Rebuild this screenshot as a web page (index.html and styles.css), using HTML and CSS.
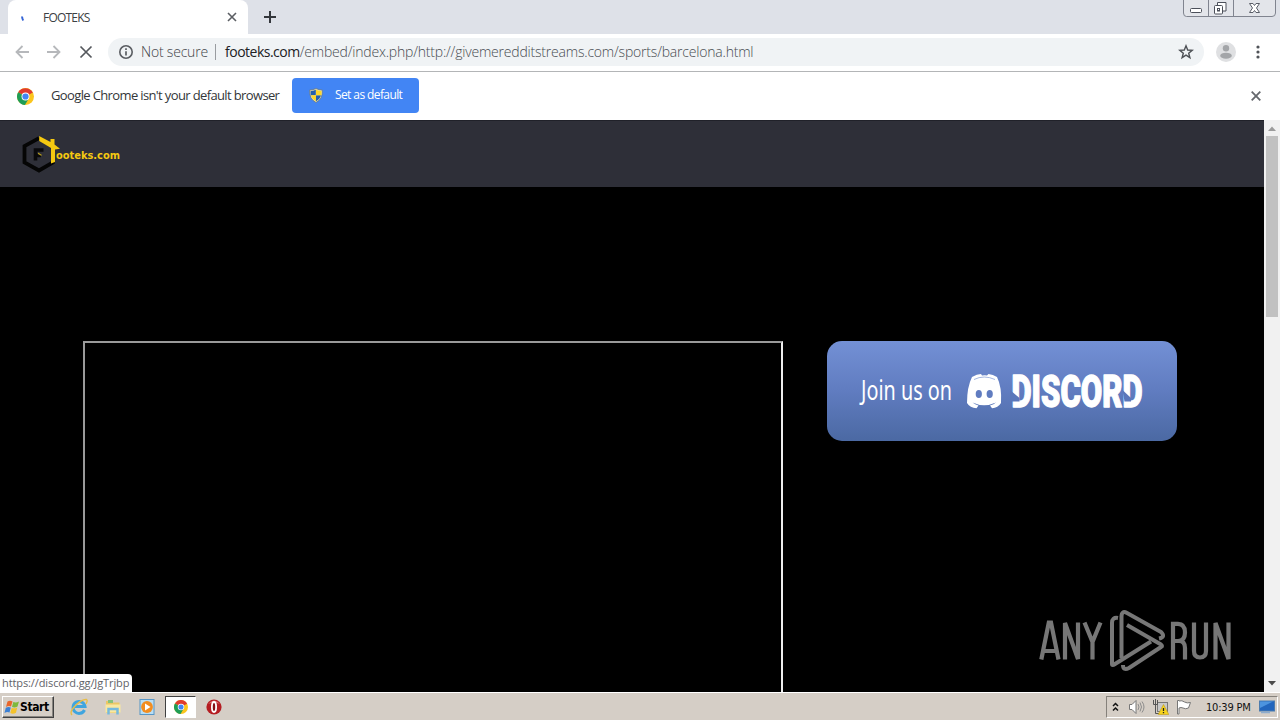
FILE: index.html
```html
<!DOCTYPE html>
<html lang="en">

<head>
  <meta charset="UTF-8" />
  <meta name="viewport" content="width=device-width, initial-scale=1.0" />
  <title>FOOTEKS</title>
  <link rel="stylesheet" href="styles.css">
</head>

<body>

  <!-- shared chrome logo -->
  <svg class="defs" width="0" height="0">
    <symbol id="chrome" viewBox="0 0 18 18">
      <circle cx="9" cy="9" r="9" fill="#fbc51d" />
      <path d="M9 9 L1.2 4.5 A9 9 0 0 1 16.8 4.8 Z" fill="#e03b2f" />
      <path d="M9 9 L1.2 4.5 A9 9 0 0 0 8.4 18 L12.5 11 Z" fill="#1f9d56" />
      <circle cx="9" cy="9" r="4.2" fill="#fff" />
      <circle cx="9" cy="9" r="3.3" fill="#4285f4" />
    </symbol>
  </svg>

  <div class="tabstrip">
    <div class="tab">
      <svg class="spinner" width="8" height="10" viewBox="0 0 8 10"><path d="M2 2.5 Q2.3 5 3.3 6.5" fill="none" stroke="#3565d6" stroke-width="2" /></svg>
      <span class="tab-title">FOOTEKS</span>
      <svg width="10" height="10" viewBox="0 0 10 10"><path d="M1 1 L9 9 M9 1 L1 9" stroke="#5b5e63" stroke-width="1.6" /></svg>
    </div>
    <svg class="new-tab" width="12" height="12" viewBox="0 0 12 12"><path d="M6 0 V12 M0 6 H12" stroke="#34373c" stroke-width="2" /></svg>
    <svg class="win-controls" width="94" height="18" viewBox="0 0 94 18">
      <path d="M1.5 0 V13 Q1.5 16.5 4.5 16.5 H90 Q93.5 16.5 93.5 13 V0 M26.5 0 V16 M51.5 0 V16" fill="#e3e5ea" stroke="#80848f" />
      <rect x="8.5" y="8.5" width="11" height="4" rx="1" fill="#fff" stroke="#4c505a" />
      <path d="M35.5 2.5 h8.5 v8.5 h-8.5 z" fill="#fff" stroke="#4c505a" />
      <rect x="32.5" y="5.5" width="8" height="8.5" rx="1" fill="#fff" stroke="#4c505a" />
      <rect x="35.5" y="8.5" width="2" height="2.5" fill="none" stroke="#4c505a" />
      <path d="M67.5 3.5 h3.5 l1.5 2 l1.5 -2 h3.5 l-3 4.5 l3 4.5 h-3.5 l-1.5 -2 l-1.5 2 h-3.5 l3 -4.5 z" fill="#fff" stroke="#5a5e68" />
    </svg>
  </div>

  <div class="toolbar">
    <svg class="nav-icon" width="14" height="14" viewBox="0 0 14 14"><path d="M14 7 H1.5 M7.5 1 L1.5 7 L7.5 13" fill="none" stroke="#b6b8bb" stroke-width="1.8" /></svg>
    <svg class="nav-icon" width="14" height="14" viewBox="0 0 14 14"><path d="M0 7 H12.5 M6.5 1 L12.5 7 L6.5 13" fill="none" stroke="#b6b8bb" stroke-width="1.8" /></svg>
    <svg class="nav-icon" width="14" height="14" viewBox="0 0 14 14"><path d="M1.5 1.5 L12.5 12.5 M12.5 1.5 L1.5 12.5" stroke="#55585d" stroke-width="1.7" /></svg>
    <div class="omnibox">
      <svg width="16" height="16" viewBox="0 0 16 16"><circle cx="8" cy="8" r="6.2" fill="none" stroke="#5a5d62" stroke-width="1.6" /><path d="M8 7.2 V11.5 M8 4.3 V6" stroke="#5a5d62" stroke-width="1.7" /></svg>
      <span class="secure">Not secure</span>
      <span class="divider"></span>
      <span class="url"><b>footeks.com</b>/embed/index.php/http://givemeredditstreams.com/sports/barcelona.html</span>
      <svg class="star" width="16" height="16" viewBox="0 0 16 16"><path d="M8 1.8 L9.7 6 L14.2 6.3 L10.7 9.2 L11.9 13.7 L8 11.2 L4.1 13.7 L5.3 9.2 L1.8 6.3 L6.3 6 Z" fill="none" stroke="#4e5156" stroke-width="1.4" /></svg>
    </div>
    <svg class="avatar" width="20" height="20" viewBox="0 0 20 20"><circle cx="10" cy="10" r="10" fill="#dfe0e2" /><circle cx="10" cy="6.3" r="3.2" fill="#a3a5a8" /><ellipse cx="10" cy="13.7" rx="5.8" ry="3" fill="#a3a5a8" /></svg>
    <svg class="dots" width="4" height="14" viewBox="0 0 4 14"><circle cx="2" cy="2" r="1.6" fill="#505358" /><circle cx="2" cy="7" r="1.6" fill="#505358" /><circle cx="2" cy="12" r="1.6" fill="#505358" /></svg>
  </div>

  <div class="infobar">
    <svg width="17" height="17"><use href="#chrome" /></svg>
    <span class="infobar-text">Google Chrome isn't your default browser</span>
    <div class="default-btn">
      <svg width="14" height="15" viewBox="0 0 14 15">
        <path d="M7 0.5 Q10 2 13.3 2 Q14 11 7 14.5 Q0 11 0.7 2 Q4 2 7 0.5 Z" fill="#e8e0b0" stroke="#65798c" stroke-width="0.8" />
        <path d="M6.8 1.8 V7.2 H1.7 Q1.5 5 1.7 3 Q4 3 6.8 1.8 Z M7 7.2 H12 Q11 11 7 13.3 Z" fill="#245fae" />
        <path d="M7 1.8 V7.2 H12.4 V3 Q10 3 7 1.8 Z M7 7.2 H2 Q3 11 7 13.3 Z" fill="#fbd62c" />
      </svg>
      <span>Set as default</span>
    </div>
    <svg class="infobar-close" width="10" height="10" viewBox="0 0 10 10"><path d="M0.7 0.7 L9.3 9.3 M9.3 0.7 L0.7 9.3" stroke="#65686d" stroke-width="1.8" /></svg>
  </div>

  <div class="viewport">
    <div class="page">
      <div class="site-nav">
        <svg width="102" height="40" viewBox="0 0 102 40">
          <path d="M18 3.2 L3.5 11.2 V27.5 L18 35.5 L32 27.5 V12 L18 3.2" fill="none" stroke="#050505" stroke-width="3.8" />
          <path d="M14.5 25.5 V15 H22.500 M14.5 20.5 H20" fill="none" stroke="#09090b" stroke-width="3.6" />
          <path d="M17 17.5 L20.5 19.5 V21 L17 19 Z" fill="#b49b1d" />
          <path d="M18.2 1 L29.5 7 V4 H33.5 V9.5 L39 13.8 L34 14.5 V27 L30 28.5 V13 L18.2 6 Z" fill="#f5c911" />
          <text class="logo-text" x="35" y="23.5" textLength="64" lengthAdjust="spacingAndGlyphs">ooteks.com</text>
        </svg>
      </div>
      <div class="content">
        <div class="player"></div>
        <svg class="discord" width="350" height="100" viewBox="0 0 350 100">
          <defs>
            <linearGradient id="blurple" x1="0" y1="0" x2="0" y2="1"><stop offset="0" stop-color="#7390d5" /><stop offset="0.5" stop-color="#607cc0" /><stop offset="1" stop-color="#4b69a3" /></linearGradient>
          </defs>
          <rect width="350" height="100" rx="15" fill="url(#blurple)" />
          <text class="join-text" x="34" y="59" textLength="91" lengthAdjust="spacingAndGlyphs">Join us on</text>
          <path d="M145 36 Q150 33 154 33 L155 34.5 Q158 34 160 34.5 L161.5 33 Q166 33.3 170 36 Q175 46 174 62 Q171 67 165 67.3 L163 64.5 Q167 63.5 169 61.5 Q157 67 145.5 61.5 Q148 63.5 151.5 64.5 L149.5 67.3 Q143 67 140 62 Q140 46 145 36 Z" fill="#fff" />
          <path d="M147 38.5 Q157 33.500 168 38.5" fill="none" stroke="#8ea4d8" stroke-width="0.8" />
          <ellipse cx="151.8" cy="53" rx="3.1" ry="4" fill="#607cc0" />
          <ellipse cx="162.7" cy="53" rx="3.1" ry="4" fill="#607cc0" />
          <text class="discord-text" x="184.5" y="66.3" textLength="131" lengthAdjust="spacingAndGlyphs">DISCORD</text>
          <!-- notches in both D letters -->
          <path d="M183 49 L192.5 57 V60.500 H183 Z M295.500 49 L304 57 V60.500 H297.500 Z" fill="#5b77ba" />
        </svg>
      </div>
      <svg class="watermark" width="194" height="64" viewBox="0 0 194 64">
        <g fill="none" stroke="#777" stroke-width="4.2">
          <path d="M2.300 50.5 L9.800 13.500 H12 L19.5 50.5 M4 42 H17.5" />
          <path d="M26 50.5 V14 L39 50 V13.5" />
          <path d="M45.500 13.5 L53.500 33 V50.5 M61.5 13.5 L53.5 33" />
          <path d="M134 50.5 V14.8 H139 Q146 14.8 146 23.5 Q146 32 139 32 H134 M140 32 Q146 32 146 39 V50.5" />
          <path d="M155 13.5 V42 Q155 48.5 161 48.5 Q167 48.5 167 42 V13.5" />
          <path d="M176.5 50.5 V14 L189.5 50 V13.5" />
        </g>
        <g fill="none" stroke="#777" stroke-width="4" stroke-linejoin="round">
          <path d="M79 9 Q73 8 73 14 V55 Q73 57 76 55 L112 32.500" />
          <path d="M82.5 49 V8 Q82.500 1 88 4 L122 23 Q127 28 120 29.5" />
          <path d="M88 16 L122 35.500 Q124 37 122 38 L90 59 Q84 62 84 56" />
        </g>
      </svg>
      <div class="status">https://discord.gg/JgTrjbp</div>
    </div>
    <div class="scrollbar">
      <svg width="8" height="5" viewBox="0 0 8 5"><path d="M0 5 L4 0.5 L8 5 Z" fill="#9b9b9b" /></svg>
      <div class="thumb"></div>
      <svg class="down" width="8" height="5" viewBox="0 0 8 5"><path d="M0 0 L4 4.5 L8 0 Z" fill="#4b4b4b" /></svg>
    </div>
  </div>

  <div class="taskbar">
    <div class="start">
      <svg width="16" height="15" viewBox="0 0 16 15">
        <path d="M3.5 1.5 Q6 0 8.5 1.5 L7 6.5 Q4.5 5.5 2 7 Z" fill="#e9662b" />
        <path d="M9.3 2 Q12 3 15 1.5 L13.5 6.5 Q11 8 8 7 Z" fill="#7eb93c" />
        <path d="M1.8 7.8 Q4.5 6.3 6.8 7.5 L5.5 12.5 Q3 11.5 0.5 13 Z" fill="#3c80d4" />
        <path d="M7.7 7.9 Q10.5 9 13.2 7.5 L12 12.7 Q9 14.5 6.3 13 Z" fill="#f4c22b" />
      </svg>
      <span>Start</span>
    </div>
    <div class="launch">
      <svg width="18" height="18" viewBox="0 0 18 18">
        <path d="M14.5 12 A6 6 0 1 1 15 8.5 H4" fill="none" stroke="#3fa5df" stroke-width="3" />
        <path d="M2 17 Q-1 14 5.5 7.5 Q12 1 16.5 1.5 Q18 2.5 16 6" fill="none" stroke="#e9bd45" stroke-width="1.4" />
      </svg>
      <svg width="18" height="18" viewBox="0 0 18 18">
        <path d="M2 3 H7 L8 4.5 H15.5 V15 H2 Z" fill="#ebc765" />
        <path d="M4 2 H9 V5 H4 Z" fill="#87c27a" />
        <path d="M1.5 6.5 H16.5 V14.5 H1.5 Z" fill="#f9e8a0" />
        <path d="M4.5 16.5 V11 H13.5 V16.5" fill="none" stroke="#75b9dd" stroke-width="2.5" />
      </svg>
      <svg width="18" height="18" viewBox="0 0 18 18">
        <rect x="2" y="1.5" width="14" height="15" fill="#b9def4" stroke="#5796c6" />
        <circle cx="9" cy="9" r="5.9" fill="#f28d20" />
        <path d="M7 5.5 L12.5 9 L7 12.5 Z" fill="#fff" />
      </svg>
      <div class="task-active"><svg width="14" height="14"><use href="#chrome" /></svg></div>
      <svg width="16" height="16" viewBox="0 0 16 16">
        <circle cx="8" cy="8" r="7.6" fill="#b51d22" />
        <path d="M2 5 Q8 -2 14 5 Q8 2 2 5" fill="#db6a6b" />
        <ellipse cx="8" cy="8" rx="2.1" ry="5" fill="#851014" stroke="#fff" stroke-width="1.8" />
      </svg>
    </div>
    <div class="tray">
      <svg width="7" height="10" viewBox="0 0 7 10"><path d="M1 4 L3.5 1.5 L6 4 M1 8.5 L3.5 6 L6 8.5" fill="none" stroke="#111" stroke-width="1.5" /></svg>
      <svg class="sound" width="17" height="16" viewBox="0 0 17 16">
        <path d="M1.5 5.5 H4 L8 1.5 V14.5 L4 10.5 H1.5 Z" fill="#fff" stroke="#777" />
        <path d="M10 5 Q12 8 10 11 M12 3.5 Q15 8 12 12.5 M14 2.5 Q18 8 14 13.5" fill="none" stroke="#8c8c8c" />
      </svg>
      <svg class="network" width="17" height="16" viewBox="0 0 17 16">
        <rect x="5.5" y="3.5" width="10" height="9" fill="#c9c9c9" stroke="#777" />
        <path d="M1.5 1 V5.5 H5.5 V1 M3.5 0 V14.5 H8" fill="none" stroke="#555" />
        <path d="M11.5 5.5 L16.8 15.5 H6.2 Z" fill="#f7d41c" stroke="#bd9a1b" stroke-width="0.6" />
        <path d="M11.5 9 V12 M11.5 13 V14.3" stroke="#222" stroke-width="1.3" />
      </svg>
      <svg class="flag" width="17" height="16" viewBox="0 0 17 16"><path d="M2.500 15 V1.500 H4 V2 Q7 1 9.500 3 Q12 4.500 15.500 3.500 L13.500 9 Q10.500 10.500 8 9 Q6 8 4 9 V15 Z" fill="#fff" stroke="#777" /></svg>
      <span class="clock">10:39 PM</span>
      <svg class="desktop" width="16" height="14" viewBox="0 0 16 14"><rect x="0.5" y="1" width="15" height="10" fill="#2366bd" stroke="#4d7cae" /><path d="M1 1.5 H14 L1 8 Z" fill="#4d94df" /><path d="M2 12.5 H11" stroke="#8eaccd" stroke-width="1.5" /></svg>
    </div>
  </div>

</body>

</html>
```

FILE: styles.css
```css
* {
  box-sizing: border-box;
}
body {
  margin: 0;
  width: 1280px;
  height: 720px;
  overflow: hidden;
  display: flex;
  flex-direction: column;
  background: #fff;
  font-family: "DejaVu Sans Condensed", "DejaVu Sans", sans-serif;
}
svg {
  display: block;
  flex: none;
}
.defs {
  position: absolute;
}
span {
  white-space: nowrap;
}

/* tabs */
.tabstrip {
  height: 34px;
  flex: none;
  display: flex;
  align-items: flex-start;
  background: #dee1e8;
}
.tab {
  width: 240px;
  height: 34px;
  margin-left: 8px;
  padding: 0 11px 0 12px;
  display: flex;
  align-items: center;
  background: #fff;
  border-radius: 8px 8px 0 0;
}
.spinner {
  margin-top: 4px;
}
.tab-title {
  flex: 1;
  margin-left: 15px;
  font-family: "Open Sans", sans-serif;
  font-size: 12px;
  letter-spacing: -0.8px;
  color: #3c4043;
}
.new-tab {
  margin: 11px 0 0 16px;
}
.win-controls {
  margin-left: auto;
  margin-right: 4px;
}

/* toolbar */
.toolbar {
  height: 38px;
  flex: none;
  display: flex;
  align-items: center;
  padding-left: 15px;
  padding-bottom: 1px;
  border-bottom: 1px solid #b3b5b7;
}
.nav-icon {
  margin-right: 18px;
}
.omnibox {
  width: 1096px;
  height: 28px;
  margin-left: -3px;
  padding: 0 10px;
  display: flex;
  align-items: center;
  border-radius: 14px;
  background: #f0f3f5;
  font-family: "Open Sans", sans-serif;
  font-size: 14px;
  font-weight: 300;
}
.secure,
.url {
  letter-spacing: -0.2px;
  padding-bottom: 2px;
}
.secure {
  width: 67px;
  margin-left: 7px;
  color: #3f4247;
}
.divider {
  width: 1px;
  height: 16px;
  margin: 0 9px 0 7px;
  background: #999ca0;
}
.url {
  color: #484c51;
}
.url b {
  font-weight: 400;
  letter-spacing: -0.5px;
  color: #202124;
}
.star {
  margin-left: auto;
}
.avatar {
  margin-left: 12px;
}
.dots {
  margin-left: 20px;
}

/* default browser bar */
.infobar {
  height: 48px;
  flex: none;
  display: flex;
  align-items: center;
  padding: 0 19px 0 17px;
  background: #fff;
}
.infobar-text {
  width: 229px;
  margin-left: 17px;
  padding-bottom: 2px;
  font-family: "Open Sans", sans-serif;
  font-size: 13px;
  letter-spacing: -0.63px;
  color: #333639;
}
.default-btn {
  width: 127px;
  height: 35px;
  margin-left: 12px;
  margin-bottom: 2px;
  padding-left: 17px;
  display: flex;
  align-items: center;
  gap: 12px;
  border-radius: 4px;
  background: #4285f4;
  color: #fff;
  font-family: "Open Sans", sans-serif;
  font-size: 12px;
  letter-spacing: -0.6px;
}
.default-btn span {
  padding-bottom: 2px;
}
.infobar-close {
  margin-left: auto;
}

/* web page */
.viewport {
  height: 572px;
  flex: none;
  display: flex;
}
.page {
  position: relative;
  width: 1264px;
  overflow: hidden;
  background: #000;
}
.site-nav {
  height: 67px;
  padding: 14px 0 0 21px;
  background: #2e2f38;
  border-top: 1px solid #202129;
}
.logo-text {
  font-family: "DejaVu Sans", sans-serif;
  font-size: 10px;
  font-weight: bold;
  fill: #f5c911;
}
.content {
  display: flex;
  align-items: flex-start;
  gap: 44px;
  padding: 154px 0 0 83px;
}
.player {
  width: 700px;
  height: 400px;
  border: 2px solid;
  border-color: #9a9a9a #eee #eee #9a9a9a;
}
.discord {
  overflow: visible;
}
.join-text {
  font-family: "Noto Sans", sans-serif;
  font-size: 28px;
  fill: #fff;
}
.discord-text {
  font-family: "Roboto", sans-serif;
  font-size: 45px;
  font-weight: 900;
  fill: #fff;
  stroke: #fff;
  stroke-width: 1.4px;
  stroke-linejoin: round;
}
.watermark {
  position: absolute;
  left: 1039px;
  top: 489px;
}
.status {
  position: absolute;
  left: 0;
  bottom: 0;
  width: 132px;
  height: 18px;
  padding-left: 2px;
  line-height: 18px;
  border-radius: 0 4px 0 0;
  background: #fff;
  color: #5f6368;
  font-family: "Open Sans", sans-serif;
  font-size: 11px;
  letter-spacing: -0.1px;
  white-space: nowrap;
}
.scrollbar {
  width: 16px;
  display: flex;
  flex-direction: column;
  align-items: center;
  padding: 6px 0;
  background: #f1f1f1;
}
.thumb {
  width: 12px;
  height: 181px;
  margin-top: 5px;
  background: #c1c1c1;
}
.down {
  margin-top: auto;
}

/* taskbar */
.taskbar {
  height: 28px;
  flex: none;
  display: flex;
  align-items: center;
  padding: 1px 2px 0;
  background: #d5cec6;
  border-top: 1px solid #fff;
}
.start {
  width: 52px;
  height: 22px;
  padding-left: 1px;
  display: flex;
  align-items: center;
  border: 1px solid;
  border-color: #fff #404040 #404040 #fff;
  box-shadow: inset -1px -1px #888580;
  font-size: 12px;
  font-weight: bold;
  letter-spacing: -0.4px;
  color: #000;
}
.launch {
  display: flex;
  align-items: center;
  gap: 16px;
  margin-left: 16px;
}
.task-active {
  width: 31px;
  height: 22px;
  margin: 0 -6px 0 -7px;
  display: flex;
  align-items: center;
  justify-content: center;
  border: 1px solid;
  border-color: #404040 #fff #fff #404040;
  background: #fff;
}
.tray {
  width: 172px;
  height: 22px;
  margin-left: auto;
  padding: 0 2px 0 5px;
  display: flex;
  align-items: center;
  border: 1px solid;
  border-color: #85817b #fff #fff #85817b;
}
.sound {
  margin-left: 9px;
}
.network {
  margin-left: 7px;
}
.flag {
  margin-left: 6px;
}
.clock {
  margin-left: 14px;
  font-size: 11px;
  letter-spacing: -0.2px;
  color: #111;
}
.desktop {
  margin-left: auto;
}
```
